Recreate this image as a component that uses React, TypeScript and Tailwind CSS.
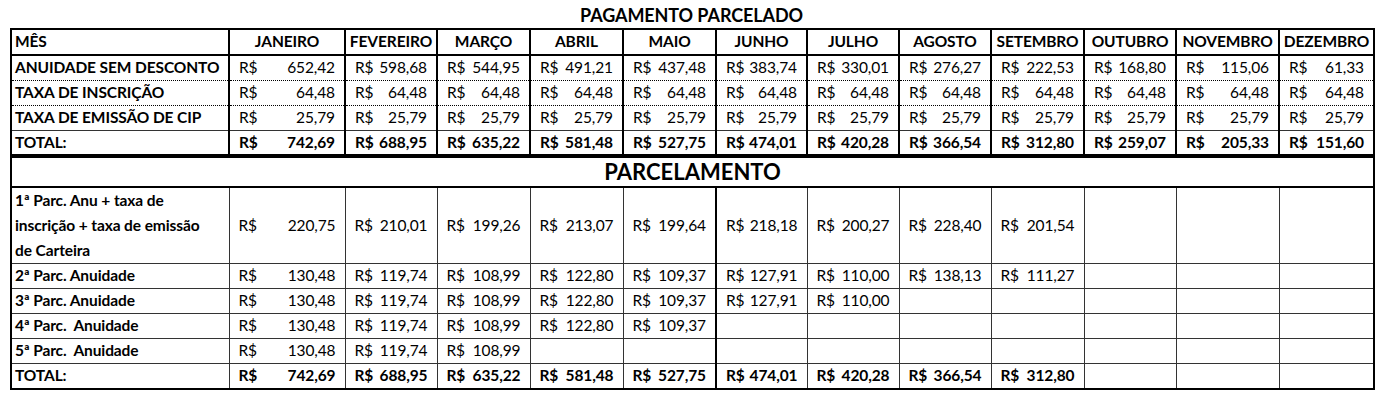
import React from "react";

const widths = [218, 116, 92, 93, 93, 93, 91, 92, 92, 93, 92, 103, 95];

const months = [
    "JANEIRO", "FEVEREIRO", "MARÇO", "ABRIL", "MAIO", "JUNHO",
    "JULHO", "AGOSTO", "SETEMBRO", "OUTUBRO", "NOVEMBRO", "DEZEMBRO",
];

const anuidade = ["652,42", "598,68", "544,95", "491,21", "437,48", "383,74", "330,01", "276,27", "222,53", "168,80", "115,06", "61,33"];
const inscricao = Array(12).fill("64,48");
const cip = Array(12).fill("25,79");
const total = ["742,69", "688,95", "635,22", "581,48", "527,75", "474,01", "420,28", "366,54", "312,80", "259,07", "205,33", "151,60"];

const parcelas = [
    { label: "1ª Parc. Anu + taxa de\ninscrição + taxa de emissão\nde Carteira", values: ["220,75", "210,01", "199,26", "213,07", "199,64", "218,18", "200,27", "228,40", "201,54"], tall: true },
    { label: "2ª Parc. Anuidade", values: ["130,48", "119,74", "108,99", "122,80", "109,37", "127,91", "110,00", "138,13", "111,27"] },
    { label: "3ª Parc. Anuidade", values: ["130,48", "119,74", "108,99", "122,80", "109,37", "127,91", "110,00"] },
    { label: "4ª Parc.  Anuidade", values: ["130,48", "119,74", "108,99", "122,80", "109,37"] },
    { label: "5ª Parc.  Anuidade", values: ["130,48", "119,74", "108,99"] },
];

function Money({ v }: { v?: string }) {
    if (!v) return null;
    return (
        <div className="flex justify-between px-[9px] whitespace-nowrap">
            <span>R$</span>
            <span>{v}</span>
        </div>
    );
}

export default function App() {
    const topRows = [
        { label: "ANUIDADE SEM DESCONTO", values: anuidade, line: "border-b border-dotted border-black" },
        { label: "TAXA DE INSCRIÇÃO", values: inscricao, line: "border-b border-dotted border-black" },
        { label: "TAXA DE EMISSÃO DE CIP", values: cip, line: "border-b border-[#333]" },
    ];

    return (
        <div className="bg-white min-h-[404px] pt-[3px] pl-[10px] text-black font-[Lato,'Liberation_Sans',sans-serif] text-[15.5px] tracking-[-0.1px]">
            <div className="w-[1363px] text-center font-bold text-[18px] h-[25px] leading-[25px]">PAGAMENTO PARCELADO</div>

            {/* top summary */}
            <table className="table-fixed border-collapse w-[1363px] border-2 border-black">
                <colgroup>
                    {widths.map((w, i) => (
                        <col key={i} style={{ width: w }} />
                    ))}
                </colgroup>
                <tbody>
                    <tr className="h-[26px] font-bold border-b-2 border-black">
                        <td className="px-[3px] py-0 border-r-2 border-black">MÊS</td>
                        {months.map((m) => (
                            <td key={m} className="text-center border-r-2 border-black p-0 whitespace-nowrap">{m}</td>
                        ))}
                    </tr>
                    {topRows.map((r) => (
                        <tr key={r.label} className={`h-[25px] ${r.line}`}>
                            <td className="px-[3px] py-0 font-bold border-r-2 border-black whitespace-nowrap">{r.label}</td>
                            {r.values.map((v, i) => (
                                <td key={i} className="p-0 border-r-2 border-black"><Money v={v} /></td>
                            ))}
                        </tr>
                    ))}
                    <tr className="h-[25px] font-bold">
                        <td className="px-[3px] py-0 border-r-2 border-black">TOTAL:</td>
                        {total.map((v, i) => (
                            <td key={i} className="p-0 border-r-2 border-black"><Money v={v} /></td>
                        ))}
                    </tr>
                </tbody>
            </table>

            {/* parcelamento */}
            <table className="table-fixed border-collapse w-[1363px] border-2 border-black">
                <colgroup>
                    {widths.map((w, i) => (
                        <col key={i} style={{ width: w }} />
                    ))}
                </colgroup>
                <tbody>
                    <tr className="h-[30px] border-b-2 border-black">
                        <td colSpan={13} className="text-center font-bold text-[22px] p-0 leading-[28px] tracking-normal">PARCELAMENTO</td>
                    </tr>
                    {parcelas.map((p) => (
                        <tr key={p.label} className={`${p.tall ? "h-[76px]" : "h-[25px]"} border-b border-[#333]`}>
                            <td className={`px-[3px] py-0 font-bold border-r border-[#333] align-middle whitespace-pre ${p.tall ? "leading-[25px]" : ""}`}>
                                {p.label}
                            </td>
                            {Array.from({ length: 12 }).map((_, i) => (
                                <td key={i} className={`p-0 border-[#333] ${i === 4 ? "border-r-2 border-r-black" : "border-r"}`}>
                                    <Money v={p.values[i]} />
                                </td>
                            ))}
                        </tr>
                    ))}
                    <tr className="h-[25px] font-bold">
                        <td className="px-[3px] py-0 border-r border-[#333]">TOTAL:</td>
                        {Array.from({ length: 12 }).map((_, i) => (
                            <td key={i} className={`p-0 border-[#333] ${i === 4 ? "border-r-2 border-r-black" : "border-r"}`}>
                                <Money v={total.slice(0, 9)[i]} />
                            </td>
                        ))}
                    </tr>
                </tbody>
            </table>
        </div>
    );
}
